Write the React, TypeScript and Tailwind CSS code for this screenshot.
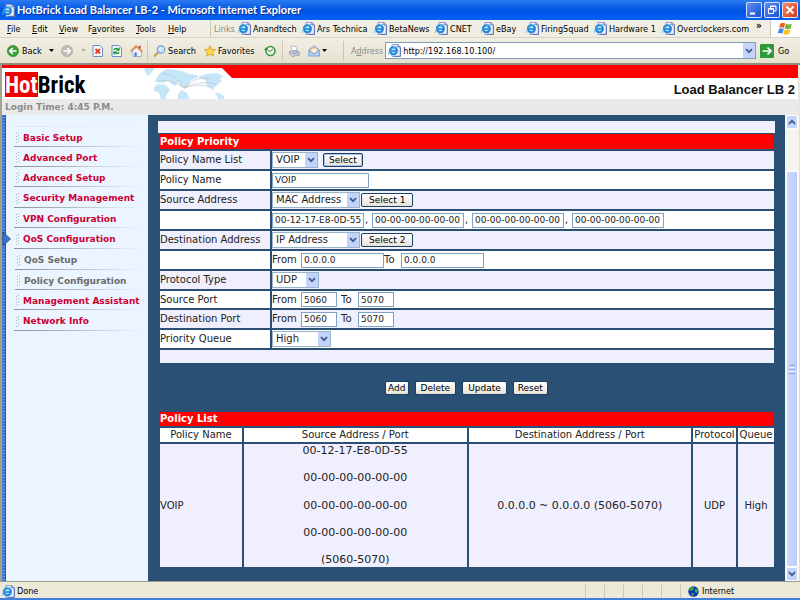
import React from 'react';

const LINKS = [
  { label: 'Anandtech', width: 'w-[64px]' },
  { label: 'Ars Technica', width: 'w-[72px]' },
  { label: 'BetaNews', width: 'w-[61px]' },
  { label: 'CNET', width: 'w-[46px]' },
  { label: 'eBay', width: 'w-[45px]' },
  { label: 'FiringSquad', width: 'w-[68px]' },
  { label: 'Hardware 1', width: 'w-[68px]' },
  { label: 'Overclockers.com', width: 'w-[92px]' },
];

const MENUS = [
  { label: 'File', width: 'w-[25px]', key: 0 },
  { label: 'Edit', width: 'w-[27px]', key: 0 },
  { label: 'View', width: 'w-[29px]', key: 0 },
  { label: 'Favorites', width: 'w-[48px]', key: 1 },
  { label: 'Tools', width: 'w-[32px]', key: 0 },
  { label: 'Help', width: 'w-[42px]', key: 0 },
];

const NAV = [
  { label: 'Basic Setup' },
  { label: 'Advanced Port' },
  { label: 'Advanced Setup' },
  { label: 'Security Management', tall: true },
  { label: 'VPN Configuration' },
  { label: 'QoS Configuration', tall: true },
  { label: 'QoS Setup', sub: true, tall: true },
  { label: 'Policy Configuration', sub: true },
  { label: 'Management Assistant' },
  { label: 'Network Info', tall: true },
];

const SOURCES = ['00-12-17-E8-0D-55', '00-00-00-00-00-00', '00-00-00-00-00-00', '00-00-00-00-00-00'];

const IeIcon = () => (
  <svg viewBox="0 0 13 13" className="w-[13px] h-[13px] shrink-0">
    <path d="M4 .5h6l2.5 2.5v9.5H4z" fill="#e9effd" stroke="#7b8fc4" strokeWidth=".8" />
    <path d="M10 .5V3h2.5M12.3 4v8.3H6" fill="none" stroke="#5568a8" strokeWidth=".9" />
    <circle cx="5.4" cy="6.8" r="3.5" fill="#bfe6ff" stroke="#1f86d8" strokeWidth="2.1" />
    <path d="M2.5 7h6.5" stroke="#1f86d8" strokeWidth="1.6" />
    <path d="M.6 10.8C-.4 8 4 3 9.8 2.6" fill="none" stroke="#5ab4ee" strokeWidth=".9" />
  </svg>
);

const Caret = () => (
  <svg viewBox="0 0 5 3" className="w-[5px] h-[3px] shrink-0"><path d="M0 0h5L2.5 3z" fill="currentColor" /></svg>
);

const Chevron = ({ up = false }: { up?: boolean }) => (
  <svg viewBox="0 0 8 6" className="w-[8px] h-[6px]">
    <path d={up ? 'M1 4.8 4 1.8l3 3' : 'M1 1.2l3 3 3-3'} fill="none" stroke="#3f5a90" strokeWidth="1.8" />
  </svg>
);

const TitleBar = () => (
  <div className="h-5 shrink-0 flex items-center pl-0.5 pr-0.5 bg-linear-to-b from-[#2a7bf0] via-[#0054e3] to-[#0560f5]">
    <IeIcon />
    <h1 className="ml-0.5 flex-1 whitespace-nowrap text-white font-bold text-[11px] leading-5 font-['Lato',sans-serif] [text-shadow:1px_1px_0_#0a2f94]">
      HotBrick Load Balancer LB-2 - Microsoft Internet Explorer
    </h1>
    <div className="flex gap-0.5">
      <button aria-label="Minimize" className="w-4 h-4 rounded-xs border border-white/80 bg-linear-to-br from-[#5b8df5] to-[#1f4fd0]">
        <svg viewBox="0 0 14 14"><path d="M3 10.5h5" stroke="#fff" strokeWidth="2" /></svg>
      </button>
      <button aria-label="Restore" className="w-4 h-4 rounded-xs border border-white/80 bg-linear-to-br from-[#5b8df5] to-[#1f4fd0]">
        <svg viewBox="0 0 14 14" fill="none" stroke="#fff">
          <path d="M5.5 5V3H11v5H9M5.5 3.5H11" />
          <path d="M3.5 5.5h5v5h-5zM3.5 6.2h5" />
        </svg>
      </button>
      <button aria-label="Close" className="w-4 h-4 rounded-xs border border-white/80 bg-linear-to-br from-[#f08a6a] to-[#d03a10]">
        <svg viewBox="0 0 14 14"><path d="M3.5 3.5l7 7M10.5 3.5l-7 7" stroke="#fff" strokeWidth="1.8" /></svg>
      </button>
    </div>
  </div>
);

const MenuBar = () => (
  <div className="h-[18px] shrink-0 flex items-stretch border-b border-[#d8d4c2] bg-[#f0eee2]">
    <nav className="flex items-center pl-[7px] border-r border-[#cdc9b4]">
      {MENUS.map((m) => (
        <button key={m.label} className={`${m.width} text-left whitespace-nowrap`}>
          {m.label.slice(0, m.key)}
          <span className="underline">{m.label[m.key]}</span>
          {m.label.slice(m.key + 1)}
        </button>
      ))}
    </nav>
    <div className="flex-1 min-w-0 flex items-center pl-[3px]">
      <span className="w-6 text-[#8c8a7c]">Links</span>
      {LINKS.map((l) => (
        <a key={l.label} href="#" className={`${l.width} flex items-center gap-0.5 whitespace-nowrap`}>
          <IeIcon />
          {l.label}
        </a>
      ))}
      <button aria-label="More links" className="ml-0.5 self-start font-bold leading-3 text-[10px]">»</button>
    </div>
    <div className="w-[30px] flex items-center justify-center bg-white border-l border-[#cdc9b4]">
      <svg viewBox="0 0 15 13" className="w-[15px] h-[13px]">
        <path d="M2.5 1.5C4.3.3 5.7.5 7.2 1.4L6 6C4.4 5 3 5 1.2 6z" fill="#ee5a24" />
        <path d="M8 1.8c2 1 3.6.9 5.8 0L12.5 6.5c-2 .9-3.7.9-5.7 0z" fill="#72b635" />
        <path d="M1 7c1.8-1 3.2-.9 4.8 0l-1.3 4.6C3 10.7 1.5 10.7-.2 11.7z" fill="#3f86e8" />
        <path d="M6.6 7.4c2 1 3.7.9 5.7 0L11 12c-2 .8-3.800.8-5.700-.1z" fill="#fbc41c" />
      </svg>
    </div>
  </div>
);

const ToolBar = () => (
  <div className="h-[25px] shrink-0 flex items-center pl-[7px] pr-1 bg-linear-to-b from-[#f1efe4] to-[#e6e2cf] whitespace-nowrap">
    <button className="flex items-center gap-[3px] w-[54px]">
      <svg viewBox="0 0 12 12" className="w-3 h-3">
        <circle cx="6" cy="6" r="5.6" fill="#37a337" stroke="#218021" strokeWidth=".6" />
        <path d="M9.5 6H3M5.8 3L2.8 6l3 3" fill="none" stroke="#fff" strokeWidth="1.6" />
      </svg>
      Back
      <span className="ml-1"><Caret /></span>
    </button>
    <button aria-label="Forward" className="flex items-center gap-2 w-[31px] text-[#b5b2a5]">
      <svg viewBox="0 0 12 12" className="w-3 h-3">
        <circle cx="6" cy="6" r="5.6" fill="#bdbdb8" stroke="#a3a39e" strokeWidth=".6" />
        <path d="M2.5 6H9M6.2 3l3 3-3 3" fill="none" stroke="#fff" strokeWidth="1.6" />
      </svg>
      <Caret />
    </button>
    <button aria-label="Stop" className="w-[19px]">
      <svg viewBox="0 0 11 12" className="w-[11px] h-3">
        <path d="M1 .5h7L10.5 3v8.5H1z" fill="#f6f9ff" stroke="#6c8cd0" />
        <path d="M3.5 4l4.5 4.5M8 4L3.5 8.5" stroke="#e23a1c" strokeWidth="1.8" />
      </svg>
    </button>
    <button aria-label="Refresh" className="w-[19px]">
      <svg viewBox="0 0 11 12" className="w-[11px] h-3">
        <path d="M1 .5h7L10.5 3v8.5H1z" fill="#f6f9ff" stroke="#6c8cd0" />
        <path d="M3 5c.5-2 3.5-2 4.5 0M8 2.5V5H5.5M8 7c-.5 2-3.5 2-4.5 0M3 9.6V7h2.5" fill="none" stroke="#1d9a2c" strokeWidth="1.3" />
      </svg>
    </button>
    <button aria-label="Home" className="w-[17px]">
      <svg viewBox="0 0 13 12" className="w-[13px] h-3">
        <path d="M2 6l5-4 4.5 5v4.5H3z" fill="#eef2fb" stroke="#8a9bc8" strokeWidth=".7" />
        <path d="M.8 6.5L6 1l6.5 6" fill="none" stroke="#e88a3c" strokeWidth="1.7" />
        <path d="M8.8.8h1.8V4L8.8 2.5z" fill="#b8402c" />
        <path d="M4.5 7.5h2.2v4H4.5z" fill="#4c7bd0" />
      </svg>
    </button>
    <div className="w-1.5 h-5 border-l border-[#cbc7b3]" />
    <button className="flex items-center gap-0.5 w-[51px]">
      <svg viewBox="0 0 13 12" className="w-[13px] h-3">
        <path d="M5 7.5L1.2 11.3" stroke="#d08a4a" strokeWidth="1.8" />
        <circle cx="8" cy="4.5" r="3.7" fill="#cfe8fb" stroke="#6e9fd8" strokeWidth="1.2" />
      </svg>
      Search
    </button>
    <button className="flex items-center gap-0.5 w-[60px]">
      <svg viewBox="0 0 12 12" className="w-3 h-3">
        <path d="M6 .7l1.6 3.6 3.9.4-2.9 2.6.9 3.9L6 9.2l-3.5 2 .9-3.9L.5 4.7l3.9-.4z" fill="#ffd84a" stroke="#d79a1c" strokeWidth=".8" />
      </svg>
      Favorites
    </button>
    <button aria-label="History" className="w-[18px]">
      <svg viewBox="0 0 12 12" className="w-3 h-3">
        <circle cx="6.5" cy="6" r="4.5" fill="#eef6ee" stroke="#3c9a3c" strokeWidth="1.6" />
        <path d="M6.5 6L9 3.8M6.5 6H4" stroke="#555" />
        <path d="M0 5l2-2.5L4.5 5z" fill="#2c8a2c" />
      </svg>
    </button>
    <div className="w-1.5 h-5 border-l border-[#cbc7b3]" />
    <button aria-label="Print" className="w-5">
      <svg viewBox="0 0 12 12" className="w-3 h-3">
        <path d="M3 1l5 .5 1 4-5 .5z" fill="#fff" stroke="#9aa8d0" strokeWidth=".7" />
        <path d="M1.5 6.5L9 5.5l2.5 2V10L4 11.5 1.5 9z" fill="#cfd0da" stroke="#85879a" strokeWidth=".7" />
        <path d="M4 8.5l6-.8" stroke="#7a86c0" />
      </svg>
    </button>
    <button aria-label="Mail" className="flex items-center gap-0.5 w-[35px]">
      <svg viewBox="0 0 12 12" className="w-3 h-3">
        <path d="M.8 5L6 .8 11.3 5v6H.8z" fill="#b9d4f5" stroke="#6b93cf" strokeWidth=".8" />
        <path d="M2.5 4.5L8 2.5l1.5 4L6 8.5 3 7z" fill="#fff3d8" stroke="#e0a860" strokeWidth=".6" />
        <path d="M.8 5.5L6 9l5.3-3.5" fill="none" stroke="#6b93cf" strokeWidth=".8" />
      </svg>
      <Caret />
    </button>
    <label htmlFor="address" className="h-5 leading-5 pl-[7px] pr-0.5 border-l border-[#cbc7b3] text-[#8c8a7c]">
      A<span className="underline">d</span>dress
    </label>
    <div className="flex-1 min-w-0 flex items-center h-[17px] pl-0.5 bg-white border border-[#7f9db9]">
      <IeIcon />
      <input id="address" defaultValue="http://192.168.10.100/" className="flex-1 min-w-0 pl-0.5 outline-none" />
      <button aria-label="Address list" className="w-3 h-[15px] flex items-center justify-center bg-[#c3d3fb]"><Chevron /></button>
    </div>
    <button className="flex items-center gap-1 ml-1 w-9">
      <svg viewBox="0 0 14 14" className="w-3.5 h-3.5">
        <rect width="14" height="14" rx="1" fill="#2f9a3c" />
        <path d="M2.5 7H11M7.5 3.5L11 7l-3.5 3.5" fill="none" stroke="#fff" strokeWidth="1.7" />
      </svg>
      Go
    </button>
  </div>
);

const Header = () => (
  <header className="shrink-0 border-l-2 border-l-[#a5a294] border-r-2 border-r-[#eae7da]">
    <div className="flex h-[34px] bg-white overflow-hidden">
      <div className="w-[220px] shrink-0 flex justify-between border-t-3 border-[#f20000]">
        <div className="pl-[3px] pt-[4px] flex font-bold text-[23px] leading-[27px] font-['Liberation_Sans_Narrow','Roboto_Condensed','Open_Sans_Condensed','Noto_Sans_Condensed','Roboto',sans-serif]">
          <span className="bg-[#f20000] text-white h-[25px]">Hot</span>
          <span className="text-black">Brick</span>
        </div>
        <svg viewBox="8 5 80 31" className="w-[80px] h-[31px] shrink-0 -mr-0.5">
          <g fill="#c5e6f8">
            <path d="M8 5h11l-4 5-3 3-3-4z" />
            <path d="M19 19l2-5 4-5 6-3 9 1 6 1 7 3 8 1 1 2-4 2-4 2-2 5-4 2-3-2-3-4-3 4-4-2-3-4-4 3z" />
            <path d="M18 24l4-3 8 1 4 5-3 4-2 6h-4l-2-7-5-2z" />
            <path d="M42 31l4-4 5 3 3 7H42z" />
            <path d="M63 13l8-2 10-1 6 3-3 3 2 3-5 2-2 3-2 3-6-4-2-6-6-2z" />
            <path d="M79 29l6 2 4 3v4h-6z" />
          </g>
          <path d="M48 25Q40 12 26 10M48 25Q34 15 22 18M48 25Q60 12 74 16M48 25Q64 16 82 22M48 25Q62 20 74 24" fill="none" stroke="#b9c0c4" strokeWidth=".6" />
        </svg>
      </div>
      <div className="flex-1">
        <div className="h-[13px] bg-[#ff0000] [clip-path:polygon(0_0,100%_0,100%_100%,10px_100%,0_3px)]" />
        <h2 className="pr-[3px] pt-1 text-right text-[13px] leading-4 font-bold text-[#111] font-['Liberation_Sans',sans-serif]">
          Load Balancer LB 2
        </h2>
      </div>
    </div>
    <p className="h-4 pl-[3px] bg-[#e9e9e9] text-[#8c8c8c] font-bold text-[9px] leading-4 font-['DejaVu_Sans',Verdana,sans-serif]">
      Login Time: 4:45 P.M.
    </p>
  </header>
);

const Sidebar = () => (
  <aside className="flex shrink-0">
    <div className="relative w-[6px] border-l-2 border-[#a5a294] bg-[repeating-linear-gradient(#3b78cc_0_2px,#5d97e2_2px_3px)] border-r border-r-[#31588f]">
      <svg viewBox="0 0 9 14" className="absolute left-0 top-[117px] w-[9px] h-3.5 z-10">
        <path d="M1 0l7.5 7L1 14z" fill="#3b78cc" stroke="#24406e" strokeWidth=".8" />
      </svg>
    </div>
    <nav className="w-[142px] pl-2 pr-2 pt-[11px] bg-[#ebf5ff] font-['DejaVu_Sans',Verdana,sans-serif] font-bold text-[9px]">
      <div className="h-px bg-linear-to-r from-[#dfe6ee] to-transparent" />
      {NAV.map((item) => (
        <a
          key={item.label}
          href="#"
          className={`block whitespace-nowrap ${item.sub ? 'ml-px text-[#6a6a6a]' : 'text-[#cc0033]'}`}
        >
          <span className={`flex items-center gap-[3px] pl-0.5 pt-0.5 ${item.tall ? 'h-5' : 'h-[19px]'}`}>
            <svg viewBox="0 0 4 11" className="w-1 h-[11px] shrink-0" fill="none" stroke="#a8b4c0" strokeDasharray="1 2">
              <path d="M.5 1v10M2.5 0v10" />
            </svg>
            {item.label}
          </span>
          <span className="block h-px bg-linear-to-r from-[#8e9296] via-[#b8bec4] to-transparent" />
        </a>
      ))}
    </nav>
  </aside>
);

const XpButton = ({ children, pad, primary }: { children: React.ReactNode; pad: string; primary?: boolean }) => (
  <button
    type="button"
    className={`h-3.5 ${pad} rounded-xs border border-[#1c3f66] bg-linear-to-b from-white to-[#e6e3d8] text-[9px] leading-3 text-black whitespace-nowrap ${primary ? 'shadow-[inset_0_0_0_1px_#a9c4f0]' : ''}`}
  >
    {children}
  </button>
);

const XpSelect = ({ id, label, value, width }: { id: string; label: string; value: string; width: string }) => (
  <span className={`relative inline-flex ${width}`}>
    <select id={id} aria-label={label} defaultValue={value} className="w-full h-4 pl-[3px] appearance-none bg-white border border-[#9ab4cc] text-[10px] leading-3.5">
      <option>{value}</option>
    </select>
    <span className="absolute right-px top-px w-3 h-3.5 flex items-center justify-center bg-[#c3d3fb] pointer-events-none"><Chevron /></span>
  </span>
);

const XpInput = ({ id, label, value, width }: { id: string; label: string; value: string; width: string }) => (
  <input id={id} aria-label={label} defaultValue={value} className={`${width} h-[15px] px-0.5 bg-white border border-[#7fa3c4] text-[9px] outline-none`} />
);

const Row = ({ label, htmlFor, shaded, short, children }: { label?: string; htmlFor?: string; shaded?: boolean; short?: boolean; children: React.ReactNode }) => (
  <tr className={shaded ? 'bg-[#f0effd]' : 'bg-white'}>
    <th scope="row" className="w-[110px] p-0 text-left font-normal whitespace-nowrap">
      {label && <label htmlFor={htmlFor}>{label}</label>}
    </th>
    <td className="p-0">
      <div className={`flex items-center whitespace-nowrap ${short ? 'h-[17px]' : 'h-[18px]'}`}>{children}</div>
    </td>
  </tr>
);

const PolicyForm = () => (
  <form>
    <div className="h-3 mb-px bg-[#f0effd]" />
    <div className="ml-0.5 mr-px">
      <h3 className="h-[15px] bg-[#ff0000] text-white font-bold text-[10px] leading-4">Policy Priority</h3>
      <table className="-mx-0.5 w-[calc(100%+4px)] border-separate border-spacing-0.5">
        <tbody>
          <Row label="Policy Name List" htmlFor="policy" shaded>
            <XpSelect id="policy" label="Policy Name List" value="VOIP" width="w-[46px] mr-[5px]" />
            <XpButton pad="px-[5px]" primary>Select</XpButton>
          </Row>
          <Row label="Policy Name" htmlFor="name">
            <XpInput id="name" label="Policy Name" value="VOIP" width="w-[97px]" />
          </Row>
          <Row label="Source Address" htmlFor="source" shaded>
            <XpSelect id="source" label="Source Address" value="MAC Address" width="w-[88px] mr-px" />
            <XpButton pad="px-[7px]">Select 1</XpButton>
          </Row>
          <Row>
            {SOURCES.map((mac, i) => (
              <React.Fragment key={i}>
                <XpInput id={`mac${i}`} label={`MAC address ${i + 1}`} value={mac} width="w-[92px]" />
                {i < 3 && <span className="w-2 pl-px">,</span>}
              </React.Fragment>
            ))}
          </Row>
          <Row label="Destination Address" htmlFor="dest" shaded>
            <XpSelect id="dest" label="Destination Address" value="IP Address" width="w-[88px] mr-px" />
            <XpButton pad="px-[7px]">Select 2</XpButton>
          </Row>
          <Row>
            <label htmlFor="ipFrom" className="w-[29px]">From</label>
            <XpInput id="ipFrom" label="From address" value="0.0.0.0" width="w-[83px]" />
            <label htmlFor="ipTo" className="w-[17px]">To</label>
            <XpInput id="ipTo" label="To address" value="0.0.0.0" width="w-[83px]" />
          </Row>
          <Row label="Protocol Type" htmlFor="protocol" shaded>
            <XpSelect id="protocol" label="Protocol Type" value="UDP" width="w-[47px]" />
          </Row>
          <Row label="Source Port" htmlFor="srcFrom" short>
            <label htmlFor="srcFrom" className="w-[29px]">From</label>
            <XpInput id="srcFrom" label="Source port from" value="5060" width="w-[36px]" />
            <label htmlFor="srcTo" className="w-[21px] pl-1">To</label>
            <XpInput id="srcTo" label="Source port to" value="5070" width="w-[36px]" />
          </Row>
          <Row label="Destination Port" htmlFor="dstFrom" shaded>
            <label htmlFor="dstFrom" className="w-[29px]">From</label>
            <XpInput id="dstFrom" label="Destination port from" value="5060" width="w-[36px]" />
            <label htmlFor="dstTo" className="w-[21px] pl-1">To</label>
            <XpInput id="dstTo" label="Destination port to" value="5070" width="w-[36px]" />
          </Row>
          <Row label="Priority Queue" htmlFor="queue">
            <XpSelect id="queue" label="Priority Queue" value="High" width="w-[59px]" />
          </Row>
        </tbody>
      </table>
      <div className="h-[13px] bg-[#f0effd]" />
    </div>
    <div className="flex justify-center gap-1.5 pt-[18px] pb-[17px]">
      <XpButton pad="px-0.5">Add</XpButton>
      <XpButton pad="px-[5px]">Delete</XpButton>
      <XpButton pad="px-[5px]">Update</XpButton>
      <XpButton pad="px-1">Reset</XpButton>
    </div>
  </form>
);

const PolicyList = () => (
  <section className="ml-0.5 mr-px">
    <h3 className="h-[14px] bg-[#ff0000] text-white font-bold text-[10px] leading-[14px]">Policy List</h3>
    <table className="-mx-0.5 w-[calc(100%+4px)] table-fixed border-separate border-spacing-0.5 text-center">
      <thead>
        <tr className="bg-white h-3.5 leading-3.5 whitespace-nowrap [&>th]:p-0 [&>th]:font-normal">
          <th className="w-[82px]">Policy Name</th>
          <th>Source Address / Port</th>
          <th>Destination Address / Port</th>
          <th className="w-[43px]">Protocol</th>
          <th className="w-[36px]">Queue</th>
        </tr>
      </thead>
      <tbody>
        <tr className="bg-[#f0effd] [&>td]:p-0">
          <td className="text-left">VOIP</td>
          <td className="text-[11px] leading-[14px]">
            <div className="h-[123px] flex flex-col justify-between">
              {SOURCES.map((mac, i) => <p key={i}>{mac}</p>)}
              <p>(5060-5070)</p>
            </div>
          </td>
          <td className="text-[11px]">0.0.0.0 ~ 0.0.0.0 (5060-5070)</td>
          <td>UDP</td>
          <td>High</td>
        </tr>
      </tbody>
    </table>
  </section>
);

const ScrollBar = () => (
  <div className="w-[15px] shrink-0 flex flex-col px-px bg-[#f5f4ee] border-r border-[#e2dfce]">
    <button aria-label="Scroll up" className="h-3.5 shrink-0 flex items-center justify-center rounded-xs border border-white bg-[#c3d3fb]"><Chevron up /></button>
    <div className="h-[42px] shrink-0" />
    <div className="flex-1 flex flex-col items-center justify-center gap-px rounded-xs border border-white bg-linear-to-r from-[#cbdafd] to-[#b9cbfa]">
      <span className="w-1.5 h-px bg-[#8fa9e8]" />
      <span className="w-1.5 h-px bg-[#eef3ff]" />
      <span className="w-1.5 h-px bg-[#8fa9e8]" />
      <span className="w-1.5 h-px bg-[#eef3ff]" />
      <span className="w-1.5 h-px bg-[#8fa9e8]" />
    </div>
    <button aria-label="Scroll down" className="h-3.5 shrink-0 flex items-center justify-center rounded-xs border border-white bg-[#c3d3fb]"><Chevron /></button>
  </div>
);

const StatusBar = () => (
  <footer className="h-[19px] shrink-0 flex items-center pl-0.5 pt-0.5 bg-[#ece9d8] border-t border-t-[#9d9a8a] border-b-2 border-b-[#3f7fdc]">
    <IeIcon />
    <span className="flex-1 pl-0.5">Done</span>
    {[0, 1, 2, 3, 4].map((i) => (
      <span key={i} className="w-[19px] h-3.5 border-l border-[#cdc9b4]" />
    ))}
    <span className="w-[120px] flex items-center gap-[3px] pl-[7px] h-3.5 border-l border-[#cdc9b4]">
      <svg viewBox="0 0 11 11" className="w-[11px] h-[11px]">
        <circle cx="5.5" cy="5.5" r="5.2" fill="#1330b8" />
        <path d="M2 2l3-1.5 1 2-2 2.5-2.5-.5zM7 3l2.5 0 1 3-2.5 1-1.5-2zM3 7l3 0-.5 3-2-.8z" fill="#2fae3c" />
      </svg>
      Internet
    </span>
  </footer>
);

export default function App() {
  return (
    <div className="h-screen flex flex-col bg-[#ece9d8] text-black text-[9px] leading-3 overflow-hidden font-['DejaVu_Sans_Condensed','DejaVu_Sans',sans-serif]">
      <TitleBar />
      <MenuBar />
      <ToolBar />
      <div className="flex-1 min-h-0 flex flex-col border-t-2 border-[#8f8c7e]">
        <Header />
        <div className="flex-1 min-h-0 flex">
          <Sidebar />
          <main className="flex-1 min-w-0 px-2.5 pt-1.5 bg-[#2b5075] text-[#222] text-[10px] leading-3 font-['DejaVu_Sans',Verdana,sans-serif]">
            <PolicyForm />
            <PolicyList />
          </main>
          <ScrollBar />
        </div>
      </div>
      <StatusBar />
    </div>
  );
}
